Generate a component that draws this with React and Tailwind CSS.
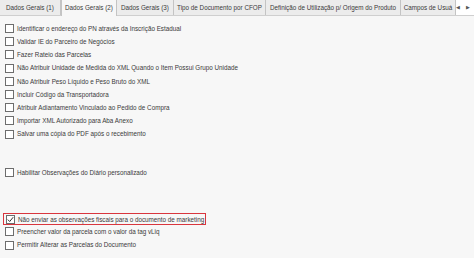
import React from "react";

const tabs = [
  { label: "Dados Gerais (1)", w: "w-[61px]" },
  { label: "Dados Gerais (2)", w: "w-[56px]", active: true },
  { label: "Dados Gerais (3)", w: "w-[57px]" },
  { label: "Tipo de Documento por CFOP", w: "w-[92px]" },
  { label: "Definição de Utilização p/ Origem do Produto", w: "w-[135px]" },
  { label: "Campos de Usuá", w: "w-[55px]" },
];

const Check = ({ checked }) => (
  <span className="w-[9px] h-[9px] border border-[#6d6d6d] bg-white flex items-center justify-center shrink-0">
    {checked && (
      <svg width="7" height="7" viewBox="0 0 7 7">
        <path d="M0.8 3.6 L2.7 5.5 L6.2 1.2" fill="none" stroke="#333" strokeWidth="1" />
      </svg>
    )}
  </span>
);

const Row = ({ label, checked, boxed }) => (
  <div
    className={`flex items-center gap-[3px] ${
      boxed
        ? "w-fit border border-[#d9363e] h-[12px] ml-[3px] pl-[2px] pr-[1px]"
        : "h-[13.2px] pl-[5px]"
    }`}
  >
    <Check checked={checked} />
    <span className="whitespace-nowrap">{label}</span>
  </div>
);

const top = [
  "Identificar o endereço do PN através da Inscrição Estadual",
  "Validar IE do Parceiro de Negócios",
  "Fazer Rateio das Parcelas",
  "Não Atribuir Unidade de Medida do XML Quando o Item Possui Grupo Unidade",
  "Não Atribuir Peso Líquido e Peso Bruto do XML",
  "Incluir Código da Transportadora",
  "Atribuir Adiantamento Vinculado ao Pedido de Compra",
  "Importar XML Autorizado para Aba Anexo",
  "Salvar uma cópia do PDF após o recebimento",
];

export default function App() {
  return (
    <div className="w-[474px] h-[261px] bg-white text-[6.3px] text-[#3a3a3a] font-['Liberation_Sans',sans-serif] overflow-hidden">
      <div className="h-[16px] flex bg-[#ececec] border-b border-[#cfcfcf]">
        {tabs.map((t) => (
          <div
            key={t.label}
            className={`${t.w} shrink-0 flex items-center justify-center whitespace-nowrap overflow-hidden border-r border-[#c4c4c4] ${
              t.active ? "bg-[#f7f7f7] border-l border-l-[#c4c4c4] -mb-px" : ""
            }`}
          >
            {t.label}
          </div>
        ))}
        <div className="flex-1 flex items-center justify-end gap-[6px] pr-[6px] text-[5px] text-[#555] bg-white">
          <span>◀</span>
          <span>▶</span>
        </div>
      </div>
      <div className="h-[242px] bg-[#f7f7f7] pt-[6px]">
        {top.map((l) => (
          <Row key={l} label={l} />
        ))}
        <div className="h-[25.4px]" />
        <Row label="Habilitar Observações do Diário personalizado" />
        <div className="h-[34px]" />
        <Row label="Não enviar as observações fiscais para o documento de marketing" checked boxed />
        <Row label="Preencher valor da parcela com o valor da tag vLiq" />
        <Row label="Permitir Alterar as Parcelas do Documento" />
      </div>
    </div>
  );
}
